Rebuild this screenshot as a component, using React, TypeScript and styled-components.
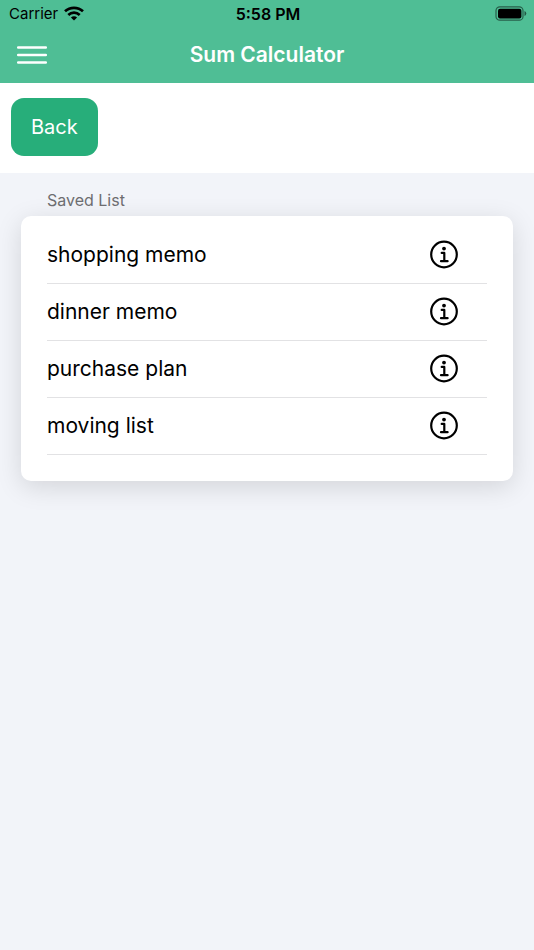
import React from "react";
import styled, { createGlobalStyle } from "styled-components";

const GlobalStyle = createGlobalStyle`
  * { box-sizing: border-box; }
  html, body, #root { height: 100%; }
  body {
    margin: 0;
    background: #f2f4f9;
    color: #000;
    font-family: Inter, "Liberation Sans", sans-serif;
  }
  button { font-family: inherit; cursor: pointer; }
`;

const Screen = styled.div`
  display: flex;
  flex-direction: column;
  min-height: 100%;
  background: #f2f4f9;
`;

const TopBar = styled.header`
  background: #4fbe95;
`;

const StatusBar = styled.div`
  display: grid;
  grid-template-columns: 1fr auto 1fr;
  align-items: center;
  height: 27px;
  padding: 0 7px 0 9px;
  font-size: 15px;
  line-height: 20px;
`;

const Carrier = styled.div`
  display: flex;
  align-items: center;
  gap: 6px;
`;

const Clock = styled.time`
  font-size: 16px;
  font-weight: 600;
`;

const BatterySlot = styled.div`
  display: flex;
  justify-content: flex-end;
`;

const NavBar = styled.div`
  display: grid;
  grid-template-columns: 32px 1fr 32px;
  align-items: center;
  height: 56px;
  padding: 0 16px;
`;

const IconButton = styled.button`
  display: flex;
  padding: 0;
  border: 0;
  background: none;
  color: inherit;
`;

const Title = styled.h1`
  margin: 0;
  color: #fff;
  font-size: 21px;
  line-height: 28px;
  font-weight: 600;
  text-align: center;
`;

const Actions = styled.div`
  display: flex;
  padding: 15px 11px 17px;
  background: #fff;
`;

const BackButton = styled.button`
  height: 58px;
  padding: 0 20px;
  border: 0;
  border-radius: 13px;
  background: #27ae7a;
  color: #fff;
  font-size: 20px;
  line-height: 28px;
`;

const Saved = styled.main`
  padding: 16px 21px;
`;

const SectionTitle = styled.h2`
  margin: 0 26px 5px;
  color: #6d6d70;
  font-size: 16px;
  line-height: 22px;
  font-weight: 400;
`;

const List = styled.ul`
  margin: 0;
  padding: 11px 26px 26px;
  list-style: none;
  border-radius: 10px;
  background: #fff;
  box-shadow: 0 6px 26px rgba(0, 0, 0, 0.13);
`;

const Row = styled.li`
  display: flex;
  align-items: center;
  justify-content: space-between;
  height: 57px;
  padding-right: 28px;
  border-bottom: 1px solid #e2e2e4;
  font-size: 21px;
  line-height: 28px;
`;

const WifiIcon = () => (
  <svg width="20" height="15" viewBox="0 0 20 15" fill="none" stroke="#000" strokeWidth="2.7" aria-label="Wi-Fi">
    <path d="M1 5.3 C6 .6 14 .6 19 5.3" />
    <path d="M4.3 8.9 C7.5 5.9 12.5 5.9 15.7 8.9" />
    <path d="M10 14.4 L6.9 11.4 C8.6 9.8 11.4 9.8 13.1 11.4 Z" fill="#000" stroke="none" />
  </svg>
);

const BatteryIcon = () => (
  <svg width="32" height="15" viewBox="0 0 32 15" aria-label="Battery full">
    <rect x="1" y=".8" width="27" height="13.4" rx="3.8" fill="none" stroke="#000" strokeOpacity=".5" strokeWidth="1.2" />
    <rect x="3" y="2.8" width="23.4" height="9.6" rx="2" />
    <path d="M29.5 5 Q31.3 5.6 31.3 7.5 Q31.3 9.4 29.5 10 Z" fillOpacity=".55" />
  </svg>
);

const MenuIcon = () => (
  <svg width="32" height="22" viewBox="0 0 32 22" stroke="#fff" strokeWidth="2.5" strokeLinecap="round" aria-hidden="true">
    <path d="M2.2 3.5 H29.8 M2.2 11 H29.8 M2.2 18.5 H29.8" />
  </svg>
);

const InfoIcon = () => (
  <svg width="30" height="30" viewBox="0 0 30 30" fill="none" stroke="#000" strokeWidth="2.2" strokeLinecap="round" strokeLinejoin="round" aria-hidden="true">
    <circle cx="15" cy="14.5" r="12.8" />
    <path d="M12.7 12.9 H15.3 V21 M12 21.2 H18.6" />
    <circle cx="15" cy="8.6" r="1.9" fill="#000" stroke="none" />
  </svg>
);

const savedLists = ["shopping memo", "dinner memo", "purchase plan", "moving list"];

export default function App() {
  return (
    <Screen>
      <GlobalStyle />
      <TopBar>
        <StatusBar>
          <Carrier>
            Carrier
            <WifiIcon />
          </Carrier>
          <Clock>5:58 PM</Clock>
          <BatterySlot>
            <BatteryIcon />
          </BatterySlot>
        </StatusBar>
        <NavBar>
          <IconButton type="button" aria-label="Menu">
            <MenuIcon />
          </IconButton>
          <Title>Sum Calculator</Title>
        </NavBar>
      </TopBar>
      <Actions>
        <BackButton type="button">Back</BackButton>
      </Actions>
      <Saved>
        <SectionTitle>Saved List</SectionTitle>
        <List>
          {savedLists.map((name) => (
            <Row key={name}>
              {name}
              <IconButton type="button" aria-label={`Details of ${name}`}>
                <InfoIcon />
              </IconButton>
            </Row>
          ))}
        </List>
      </Saved>
    </Screen>
  );
}
